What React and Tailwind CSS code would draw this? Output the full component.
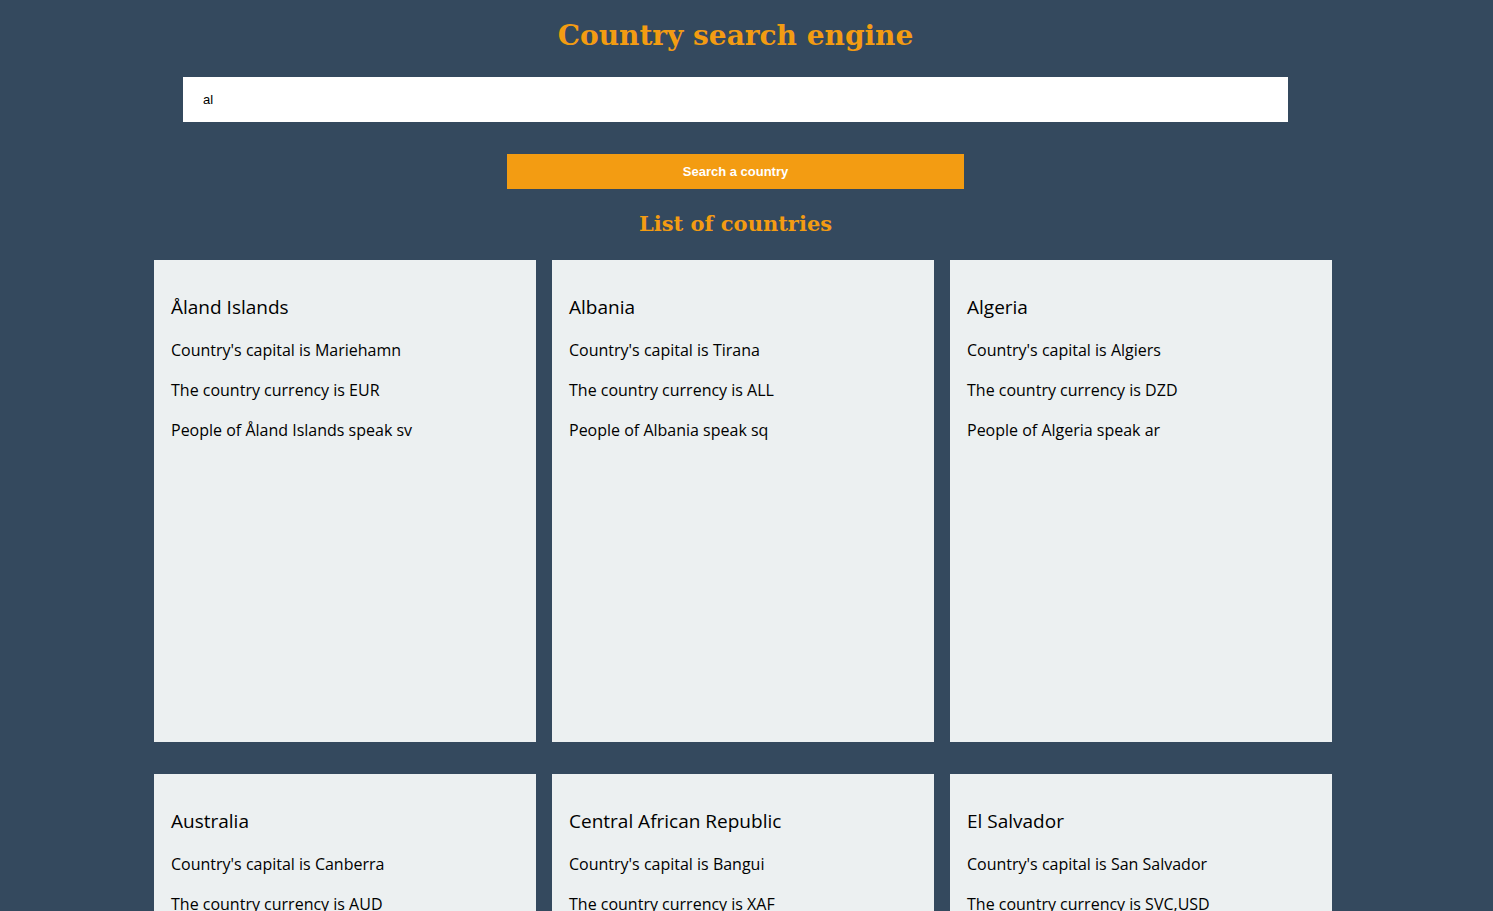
import React from "react";

const countries = [
  { name: "Åland Islands", capital: "Mariehamn", currency: "EUR", lang: "sv" },
  { name: "Albania", capital: "Tirana", currency: "ALL", lang: "sq" },
  { name: "Algeria", capital: "Algiers", currency: "DZD", lang: "ar" },
  { name: "Australia", capital: "Canberra", currency: "AUD", lang: "en" },
  { name: "Central African Republic", capital: "Bangui", currency: "XAF", lang: "fr,sg" },
  { name: "El Salvador", capital: "San Salvador", currency: "SVC,USD", lang: "es" },
];

function Card({ c }) {
  return (
    <div className="bg-[#ecf0f1] h-[482px] px-[17px] pt-[33px] text-black" style={{ fontFamily: '"Open Sans", sans-serif' }}>
      <h3 className="text-[19px] leading-[28px] font-medium">{c.name}</h3>
      <p className="mt-[17px] text-[16px] leading-[24px]">Country's capital is {c.capital}</p>
      <p className="mt-[16px] text-[16px] leading-[24px]">The country currency is {c.currency}</p>
      <p className="mt-[16px] text-[16px] leading-[24px]">People of {c.name} speak {c.lang}</p>
    </div>
  );
}

export default function App() {
  return (
    <div className="min-h-screen bg-[#34495e] overflow-hidden">
      <div className="ml-[183px] w-[1105px] flex flex-col items-center pt-[14px]">
        <h1 className="text-[#f39c12] font-bold text-[28px] leading-[44px]" style={{ fontFamily: '"DejaVu Serif", serif' }}>
          Country search engine
        </h1>
        <input
          defaultValue="al"
          className="mt-[19px] w-full h-[45px] bg-white pl-[20px] text-[13px] text-black outline-none"
          style={{ fontFamily: '"Liberation Sans", Arial, sans-serif' }}
        />
        <button
          className="mt-[32px] w-[457px] h-[35px] bg-[#f39c12] text-white font-bold text-[13px]"
          style={{ fontFamily: '"Liberation Sans", Arial, sans-serif' }}
        >
          Search a country
        </button>
        <h2 className="mt-[17px] text-[#f39c12] font-bold text-[21px] leading-[36px]" style={{ fontFamily: '"DejaVu Serif", serif' }}>
          List of countries
        </h2>
      </div>
      <div className="ml-[154px] mt-[18px] grid grid-cols-[382px_382px_382px] gap-x-[16px] gap-y-[32px]">
        {countries.map((c) => (
          <Card key={c.name} c={c} />
        ))}
      </div>
    </div>
  );
}
